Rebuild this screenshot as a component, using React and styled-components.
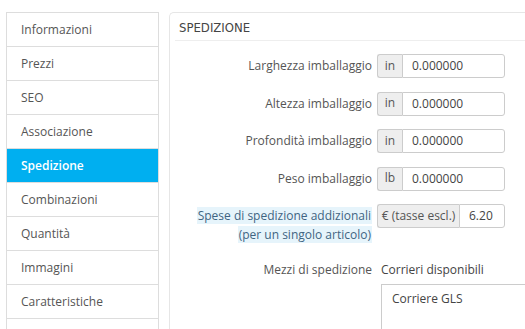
import React from "react";
import styled, { createGlobalStyle } from "styled-components";

const Global = createGlobalStyle`
  html, body { margin: 0; padding: 0; background: #fff; overflow: hidden; }
  body { font-family: "Open Sans", "Liberation Sans", sans-serif; font-size: 12px; color: #555; }
`;

const Page = styled.div`
  display: flex;
  align-items: flex-start;
  gap: 10px;
  padding: 12px 0 0 6px;
  height: 317px;
  overflow: hidden;
`;

const Sidebar = styled.nav`
  width: 151px;
  flex: none;
  border: 1px solid #ddd;
  border-bottom: none;
  background: #fff;
`;

const NavItem = styled.div`
  height: 33px;
  line-height: 33px;
  padding-left: 14px;
  border-bottom: 1px solid #ddd;
  color: ${(p) => (p.$active ? "#fff" : "#555")};
  background: ${(p) => (p.$active ? "#00aff0" : "#fff")};
  font-weight: ${(p) => (p.$active ? 600 : 400)};
  white-space: nowrap;
`;

const Panel = styled.section`
  flex: 1;
  min-width: 0;
  border: 1px solid #e6e6e6;
  border-right: none;
  border-bottom: none;
  border-radius: 5px 0 0 0;
  padding: 0 0 0 5px;
  height: 320px;
  background: #fff;
`;

const Heading = styled.h3`
  margin: 0 0 13px;
  height: 27px;
  line-height: 29px;
  padding-left: 4px;
  border-bottom: 1px solid #eee;
  font-family: "Liberation Sans Narrow", "DejaVu Sans Condensed", "Liberation Sans", sans-serif;
  font-size: 13px;
  font-weight: 400;
  color: #444;
  text-transform: uppercase;
`;

const Row = styled.div`
  display: grid;
  grid-template-columns: 197px 1fr;
  column-gap: 5px;
  align-items: start;
  margin-bottom: 13.5px;
`;

const Label = styled.div`
  text-align: right;
  line-height: 19px;
  padding-top: 2px;
  font-size: 12px;
  color: #555;
`;

const Tip = styled.span`
  background: #e6f4fb;
  color: #3f6482;
  padding: 0 1px;
  box-decoration-break: clone;
  -webkit-box-decoration-break: clone;
`;

const Group = styled.div`
  display: flex;
  height: 24px;
`;

const Addon = styled.span`
  box-sizing: border-box;
  display: flex;
  align-items: center;
  justify-content: center;
  width: ${(p) => p.$w}px;
  padding: 0 0 2px;
  background: #eee;
  border: 1px solid #ccc;
  border-right: none;
  border-radius: 3px 0 0 3px;
  color: #555;
  font-size: 12px;
  white-space: nowrap;
`;

const Field = styled.span`
  box-sizing: border-box;
  display: flex;
  align-items: center;
  width: ${(p) => p.$w}px;
  padding: 0 0 1px 9px;
  border: 1px solid #ccc;
  border-radius: 0 3px 3px 0;
  background: #fff;
  color: #444;
  font-size: 12px;
`;

const Carriers = styled.div`
  padding-left: 4px;
`;

const CarrierTitle = styled.div`
  line-height: 19px;
  padding-top: 2px;
  color: #444;
  margin-bottom: 5px;
`;

const CarrierBox = styled.div`
  border: 1px solid #ccc;
  border-right: none;
  border-bottom: none;
  height: 40px;
  padding: 5px 10px;
  color: #444;
`;

const nav = [
  "Informazioni",
  "Prezzi",
  "SEO",
  "Associazione",
  "Spedizione",
  "Combinazioni",
  "Quantità",
  "Immagini",
  "Caratteristiche",
  "",
];

const dims = [
  ["Larghezza imballaggio", "in"],
  ["Altezza imballaggio", "in"],
  ["Profondità imballaggio", "in"],
  ["Peso imballaggio", "lb"],
];

export default function App() {
  return (
    <>
      <Global />
      <Page>
        <Sidebar>
          {nav.map((n, i) => (
            <NavItem key={i} $active={n === "Spedizione"}>
              {n}
            </NavItem>
          ))}
        </Sidebar>
        <Panel>
          <Heading>Spedizione</Heading>
          {dims.map(([l, u]) => (
            <Row key={l}>
              <Label>{l}</Label>
              <Group>
                <Addon $w={25}>{u}</Addon>
                <Field $w={103}>0.000000</Field>
              </Group>
            </Row>
          ))}
          <Row>
            <Label>
              <Tip>Spese di spedizione addizionali</Tip>
              <br />
              <Tip>(per un singolo articolo)</Tip>
            </Label>
            <Group>
              <Addon $w={82}>€ (tasse escl.)</Addon>
              <Field $w={46}>6.20</Field>
            </Group>
          </Row>
          <Row>
            <Label>Mezzi di spedizione</Label>
            <Carriers>
              <CarrierTitle>Corrieri disponibili</CarrierTitle>
              <CarrierBox>Corriere GLS</CarrierBox>
            </Carriers>
          </Row>
        </Panel>
      </Page>
    </>
  );
}
